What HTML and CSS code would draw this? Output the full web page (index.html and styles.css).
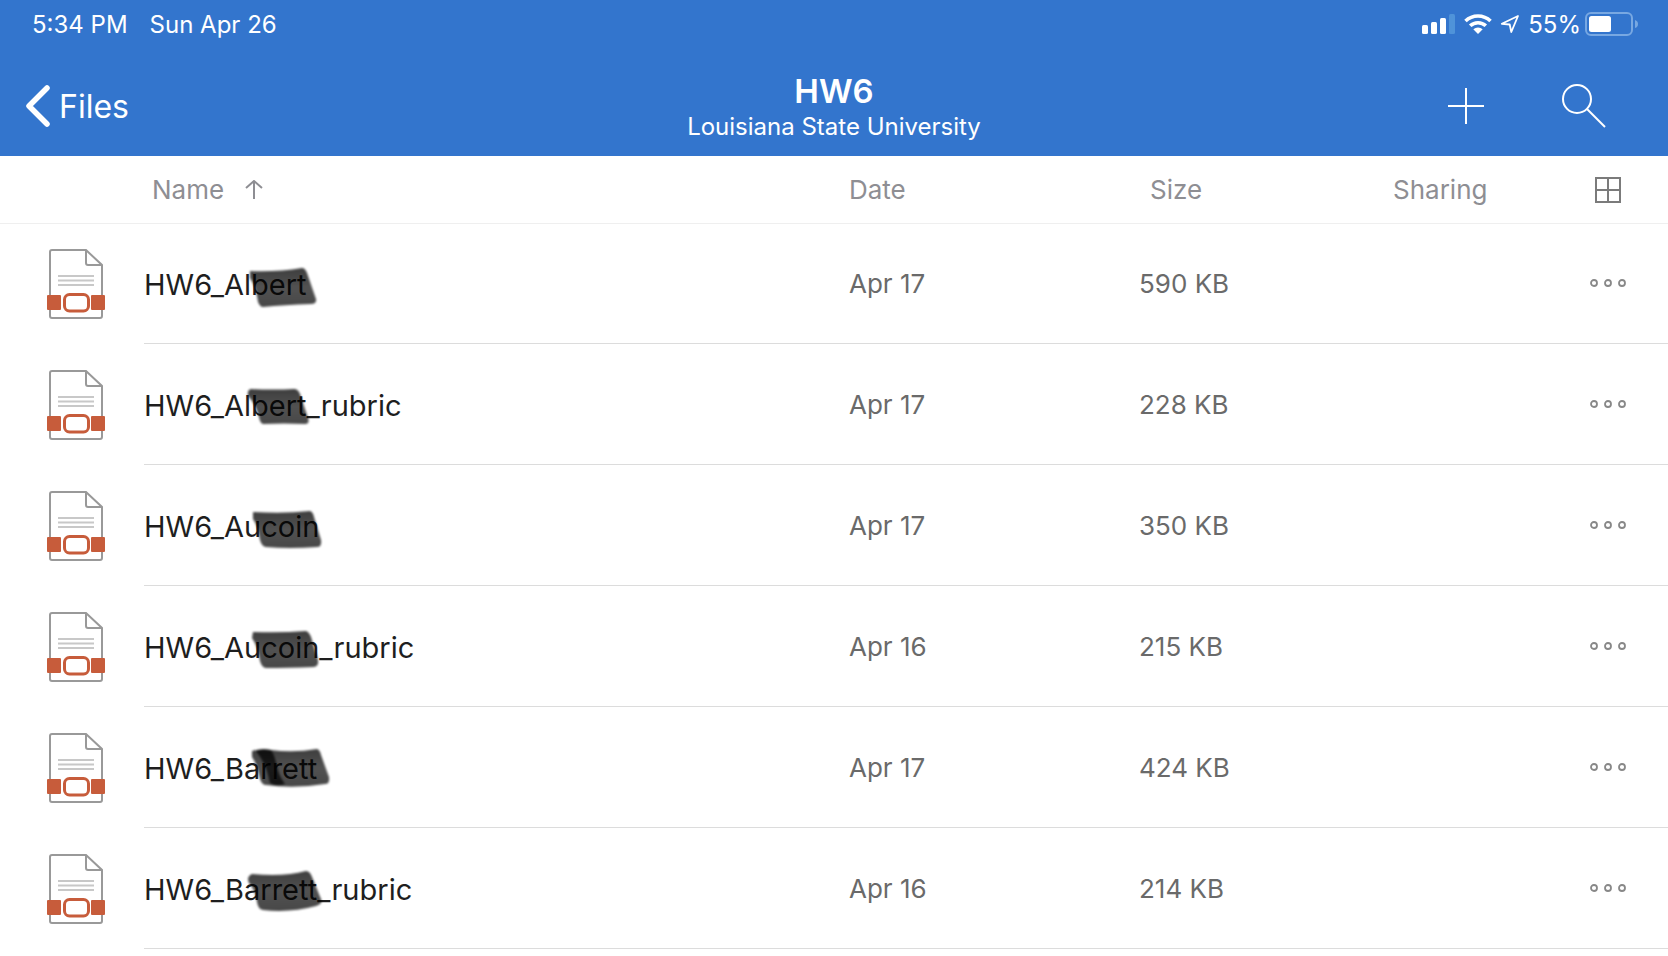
FILE: index.html
```html
<!DOCTYPE html>
<html lang="en">
<head>
    <meta charset="UTF-8">
    <meta name="viewport" content="width=device-width, initial-scale=1.0">
    <title>HW6 - Files</title>
    <link rel="stylesheet" href="styles.css">
</head>
<body>
    <header class="header">
        <div class="status">
            <span>5:34 PM</span>
            <span>Sun Apr 26</span>
            <div class="status-right">
                <svg class="signal" width="34" height="20" viewBox="0 0 34 20" fill="#fff">
                    <rect x="0" y="11" width="6" height="9" rx="1.5"/>
                    <rect x="9" y="8" width="6" height="12" rx="1.5"/>
                    <rect x="18" y="4" width="6" height="16" rx="1.5"/>
                    <rect x="27" y="0" width="6" height="20" rx="1.5" fill="#4f93d9"/>
                </svg>
                <svg class="wifi" width="28" height="20" viewBox="0 0 28 20">
                    <path d="M1.5 7A18 18 0 0 1 26.500 7M6.200 11.800A11.300 11.300 0 0 1 21.800 11.800" fill="none" stroke="#fff" stroke-width="3.600"/>
                    <path d="M14 20L9.300 15.300A7 7 0 0 1 18.700 15.300Z" fill="#fff"/>
                </svg>
                <svg class="location" width="20" height="20" viewBox="0 0 20 20">
                    <path d="M18 2L1.800 9.800L9.700 10.500L11.300 18Z" fill="none" stroke="#fff" stroke-width="1.800" stroke-linejoin="round"/>
                </svg>
                <div class="charge">
                    <span>55%</span>
                    <svg class="battery" width="54" height="24" viewBox="0 0 54 24">
                        <rect x="1" y="1" width="46" height="22" rx="5" fill="none" stroke="#78a8e2" stroke-width="2"/>
                        <rect x="4" y="4" width="22" height="16" rx="2.500" fill="#fff"/>
                        <path d="M50 8Q53 9 53 12T50 16Z" fill="#78a8e2"/>
                    </svg>
                </div>
            </div>
        </div>
        <nav class="nav">
            <a class="back" href="#">
                <svg width="26" height="44" viewBox="0 0 26 44"><path d="M22 4L4 22L22 40" fill="none" stroke="#fff" stroke-width="5.500" stroke-linecap="round" stroke-linejoin="round"/></svg>
                Files
            </a>
            <div class="title">
                <h1>HW6</h1>
                <p>Louisiana State University</p>
            </div>
            <div class="actions">
                <button aria-label="Add">
                    <svg width="36" height="36" viewBox="0 0 36 36"><path d="M18 0V36M0 18H36" stroke="#fff" stroke-width="2"/></svg>
                </button>
                <button aria-label="Search">
                    <svg width="44" height="44" viewBox="0 0 44 44" fill="none" stroke="#fff" stroke-width="2"><circle cx="15" cy="15" r="14"/><path d="M25 25L43 43"/></svg>
                </button>
            </div>
        </nav>
    </header>

    <!-- shared file icon -->
    <svg class="symbols" width="0" height="0">
        <defs>
            <linearGradient id="ink" x1="0" y1="0" x2="0" y2="1">
                <stop offset="0" stop-opacity="0.760"/>
                <stop offset="0.5" stop-opacity="0.680"/>
                <stop offset="1" stop-opacity="0.720"/>
            </linearGradient>
        </defs>
        <symbol id="file" viewBox="0 0 58 70">
            <path d="M5 1H39L55 16V67Q55 69 53 69H5Q3 69 3 67V3Q3 1 5 1Z" fill="#fff" stroke="#999" stroke-width="2"/>
            <path d="M39 1V14Q39 16 41 16H54" fill="none" stroke="#999" stroke-width="2"/>
            <path d="M11 27H47M11 31.500H47M11 36H47" stroke="#c8c8c8" stroke-width="2"/>
            <rect x="0" y="46" width="14" height="15" rx="1" fill="#c75c3b"/>
            <rect x="44" y="46" width="14" height="15" rx="1" fill="#c75c3b"/>
            <rect x="17.500" y="45.500" width="24" height="16.500" rx="5" fill="#fff" stroke="#c75c3b" stroke-width="3"/>
        </symbol>
        <symbol id="more" viewBox="0 0 36 8">
            <g fill="none" stroke="#888" stroke-width="1.800"><circle cx="4" cy="4" r="3"/><circle cx="18" cy="4" r="3"/><circle cx="32" cy="4" r="3"/></g>
        </symbol>
    </svg>

    <table class="files">
        <thead>
            <tr>
                <th class="col-icon"></th>
                <th class="col-name">Name
                    <svg class="sort" width="18" height="19" viewBox="0 0 18 19"><path d="M9 19V1M1 8L9 1L17 8" fill="none" stroke="#8e8e93" stroke-width="2"/></svg>
                </th>
                <th class="col-date">Date</th>
                <th class="col-size">Size</th>
                <th class="col-sharing">Sharing</th>
                <th class="col-more">
                    <button aria-label="Grid view">
                        <svg width="28" height="28" viewBox="0 0 28 28"><path d="M2 2H26V26H2ZM14 2V26M2 14H26" fill="none" stroke="#7b7b7b" stroke-width="2"/></svg>
                    </button>
                </th>
            </tr>
        </thead>
        <tbody>
            <tr>
                <td><svg class="icon"><use href="#file"/></svg></td>
                <td class="name"><div class="file-name">HW6_Albert
                    <svg class="marker" viewBox="0 0 340 60"><path d="M106 18Q134 19 158 15Q161 15 163 20L172 46Q173 51 167 51Q140 52 119 54Q116 54 114 49Q112 34 106 25Z"/></svg>
                </div></td>
                <td>Apr 17</td>
                <td>590 KB</td>
                <td></td>
                <td class="more"><button aria-label="More"><svg class="dots"><use href="#more"/></svg></button></td>
            </tr>
            <tr>
                <td><svg class="icon"><use href="#file"/></svg></td>
                <td class="name"><div class="file-name">HW6_Albert_rubric
                    <svg class="marker" viewBox="0 0 340 60"><path d="M107 15Q130 16 150 15Q154 15 156 20L164 44Q166 50 161 50Q140 49 119 50Q116 49 115 43Q111 29 104 22Q103 16 107 15Z"/></svg>
                </div></td>
                <td>Apr 17</td>
                <td>228 KB</td>
                <td></td>
                <td class="more"><button aria-label="More"><svg class="dots"><use href="#more"/></svg></button></td>
            </tr>
            <tr>
                <td><svg class="icon"><use href="#file"/></svg></td>
                <td class="name"><div class="file-name">HW6_Aucoin
                    <svg class="marker" viewBox="0 0 340 60"><path d="M109 17Q140 19 166 16Q169 17 170 22L177 45Q178 52 173 52Q145 54 122 52Q118 52 116 45Q114 31 109 24Z"/></svg>
                </div></td>
                <td>Apr 17</td>
                <td>350 KB</td>
                <td></td>
                <td class="more"><button aria-label="More"><svg class="dots"><use href="#more"/></svg></button></td>
            </tr>
            <tr>
                <td><svg class="icon"><use href="#file"/></svg></td>
                <td class="name"><div class="file-name">HW6_Aucoin_rubric
                    <svg class="marker" viewBox="0 0 340 60"><path d="M109 16Q138 17 162 15Q165 16 167 21L174 44Q175 50 170 51Q142 52 122 52Q118 52 116 45Q114 31 108 22Z"/></svg>
                </div></td>
                <td>Apr 16</td>
                <td>215 KB</td>
                <td></td>
                <td class="more"><button aria-label="More"><svg class="dots"><use href="#more"/></svg></button></td>
            </tr>
            <tr>
                <td><svg class="icon"><use href="#file"/></svg></td>
                <td class="name"><div class="file-name">HW6_Barrett
                    <svg class="marker" viewBox="0 0 340 60"><path d="M108 14Q117 11 127 13Q150 16 173 12Q176 13 177 18L185 40Q186 47 181 47Q150 52 122 48Q118 48 116 42Q113 27 108 20Z"/><path d="M112 14Q117 11 127 13C134 23 131 34 141 47Q131 50 126 46Q122 26 112 14Z"/></svg>
                </div></td>
                <td>Apr 17</td>
                <td>424 KB</td>
                <td></td>
                <td class="more"><button aria-label="More"><svg class="dots"><use href="#more"/></svg></button></td>
            </tr>
            <tr>
                <td><svg class="icon"><use href="#file"/></svg></td>
                <td class="name"><div class="file-name">HW6_Barrett_rubric
                    <svg class="marker" viewBox="0 0 340 60"><path d="M108 16Q140 19 162 13Q166 13 168 19L177 41Q179 46 172 48Q146 55 119 52Q114 51 113 44Q111 31 105 25Q102 19 108 16Z"/></svg>
                </div></td>
                <td>Apr 16</td>
                <td>214 KB</td>
                <td></td>
                <td class="more"><button aria-label="More"><svg class="dots"><use href="#more"/></svg></button></td>
            </tr>
        </tbody>
    </table>
</body>
</html>
```
FILE: styles.css
```css
* {
    box-sizing: border-box;
    margin: 0;
    padding: 0;
}

body {
    font-family: Inter, "Liberation Sans", sans-serif;
    background-color: #fff;
    color: #1e1e1e;
}

svg {
    display: block;
}

button {
    display: block;
    background: none;
    border: none;
    cursor: pointer;
}

.symbols {
    position: absolute;
}

/* blue top area */
.header {
    background-color: #3375cd;
    color: #fff;
}

.status {
    display: flex;
    align-items: center;
    gap: 22px;
    height: 56px;
    padding: 0 29px 8px 32px;
    font-size: 24px;
}

.status-right {
    display: flex;
    align-items: center;
    gap: 8px;
    margin-left: auto;
}

.charge {
    display: flex;
    align-items: center;
    gap: 4px;
}

.nav {
    display: grid;
    grid-template-columns: 1fr auto 1fr;
    align-items: center;
    height: 100px;
    padding: 0 25px;
}

.back {
    display: flex;
    align-items: center;
    gap: 8px;
    color: #fff;
    font-size: 32px;
    text-decoration: none;
}

.title {
    padding-top: 2px;
    text-align: center;
}

.title h1 {
    font-size: 33px;
    font-weight: 600;
    line-height: 40px;
}

.title p {
    font-size: 24px;
    line-height: 32px;
}

.actions {
    display: flex;
    align-items: center;
    justify-content: flex-end;
    gap: 78px;
    padding-right: 37px;
}

/* file list */
.files {
    width: 100%;
    table-layout: fixed;
    border-collapse: separate;
    border-spacing: 0;
    font-size: 26px;
}

.files th {
    height: 67px;
    color: #8e8e93;
    font-weight: 400;
    text-align: left;
    box-shadow: 0 1px 0 #efefef;
}

.files td {
    height: 121px;
    color: #6a6a6a;
    border-bottom: 1px solid #dcdcdc;
}

.files td:first-child {
    border-bottom: none;
}

.col-icon {
    width: 144px;
}

.files .col-name {
    padding-left: 8px;
}

.col-date {
    width: 290px;
}

.col-size {
    width: 254px;
    padding-left: 11px;
}

.col-sharing {
    width: 177px;
}

.col-more {
    width: 98px;
}

.col-more button {
    margin-left: 24px;
}

.sort {
    display: inline-block;
    margin-left: 14px;
}

.icon {
    width: 58px;
    height: 70px;
    margin-left: 47px;
}

.files .name {
    color: #1e1e1e;
    font-size: 29px;
}

.file-name {
    position: relative;
    padding-top: 4px;
    line-height: 60px;
}

/* marker strokes lie over the names */
.marker {
    position: absolute;
    top: 2px;
    left: 0;
    width: 340px;
    height: 60px;
    fill: url(#ink);
    filter: blur(1px);
}

.more button {
    margin-left: 20px;
}

.dots {
    width: 36px;
    height: 8px;
}
```
